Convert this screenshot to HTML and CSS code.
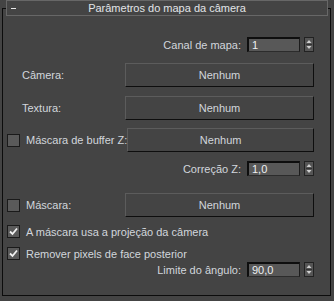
FILE: index.html
```html
<!DOCTYPE html>
<html lang="pt">
<head>
<meta charset="utf-8">
<link rel="stylesheet" href="styles.css">
</head>
<body>
<div class="frame">
  <div class="title">
    <span class="collapse"></span>
    <span class="title-text">Parâmetros do mapa da câmera</span>
  </div>

  <div class="row row-canal right">
    <span class="label">Canal de mapa:</span>
    <div class="field">1</div>
    <div class="spin"><svg width="8" height="13" viewBox="0 0 8 13"><path d="M4 2 L6.5 5 L1.5 5 Z" fill="#cfcfcf"/><line x1="1" y1="6.5" x2="7" y2="6.5" stroke="#333"/><path d="M1.5 8 L6.5 8 L4 11 Z" fill="#cfcfcf"/></svg></div>
  </div>

  <div class="row row-cam">
    <span class="label lbl-plain">Câmera:</span>
    <div class="btn">Nenhum</div>
  </div>

  <div class="row row-tex">
    <span class="label lbl-plain">Textura:</span>
    <div class="btn">Nenhum</div>
  </div>

  <div class="row row-bz">
    <span class="cb"></span>
    <span class="label lbl-cb">Máscara de buffer Z:</span>
    <div class="btn">Nenhum</div>
  </div>

  <div class="row row-corr right">
    <span class="label">Correção Z:</span>
    <div class="field">1,0</div>
    <div class="spin"><svg width="8" height="13" viewBox="0 0 8 13"><path d="M4 2 L6.5 5 L1.5 5 Z" fill="#cfcfcf"/><line x1="1" y1="6.5" x2="7" y2="6.5" stroke="#333"/><path d="M1.5 8 L6.5 8 L4 11 Z" fill="#cfcfcf"/></svg></div>
  </div>

  <div class="row row-mask">
    <span class="cb"></span>
    <span class="label lbl-cb">Máscara:</span>
    <div class="btn">Nenhum</div>
  </div>

  <div class="row row-chk1">
    <span class="cb checked"><svg width="11" height="11" viewBox="0 0 11 11"><path d="M2 5.5 L4.5 8 L9 2.5" fill="none" stroke="#f2f2f2" stroke-width="1.8"/></svg></span>
    <span class="label lbl-cb">A máscara usa a projeção da câmera</span>
  </div>

  <div class="row row-chk2">
    <span class="cb checked"><svg width="11" height="11" viewBox="0 0 11 11"><path d="M2 5.5 L4.5 8 L9 2.5" fill="none" stroke="#f2f2f2" stroke-width="1.8"/></svg></span>
    <span class="label lbl-cb">Remover pixels de face posterior</span>
  </div>

  <div class="row row-lim right">
    <span class="label">Limite do ângulo:</span>
    <div class="field">90,0</div>
    <div class="spin"><svg width="8" height="13" viewBox="0 0 8 13"><path d="M4 2 L6.5 5 L1.5 5 Z" fill="#cfcfcf"/><line x1="1" y1="6.5" x2="7" y2="6.5" stroke="#333"/><path d="M1.5 8 L6.5 8 L4 11 Z" fill="#cfcfcf"/></svg></div>
  </div>
</div>
</body>
</html>
```

FILE: styles.css
```css
html, body {
  margin: 0;
  padding: 0;
  background: #444444;
}
body {
  width: 334px;
  height: 301px;
  overflow: hidden;
  font-family: "Liberation Sans", Arial, sans-serif;
  font-size: 11px;
  color: #d2d6dc;
}
.frame {
  margin: 8px 3px 0 2px;
  border: 1px solid #0c0c0c;
  height: 286px;
  display: flex;
  flex-direction: column;
}
.title {
  margin: -9px 2px 0 3px;
  height: 14px;
  border: 1px solid #676767;
  background: #444444;
  display: flex;
  align-items: center;
  justify-content: center;
  position: relative;
}
.collapse {
  position: absolute;
  left: 4px;
  top: 7px;
  width: 5px;
  height: 1px;
  background: #e8e8e8;
}
.title-text {
  color: #e2e4e8;
  font-size: 11px;
}
.row {
  display: flex;
  align-items: center;
  padding-right: 16px;
}
.right {
  justify-content: flex-end;
  height: 15px;
}
.right .label {
  margin-right: 6px;
}
.field {
  width: 47px;
  height: 12px;
  background: #585858;
  border-top: 2px solid #0e0e0e;
  border-left: 2px solid #0e0e0e;
  border-right: 1px solid #1c1c1c;
  border-bottom: 1px solid #2c2c2c;
  color: #eef0f2;
  line-height: 12px;
  padding-left: 3px;
  margin-right: 4px;
}
.spin {
  width: 8px;
  height: 13px;
  background: #555555;
  border: 1px solid #222222;
  display: flex;
}
.btn {
  width: 187px;
  height: 22px;
  margin-left: auto;
  border-top: 1px solid #5c5c5c;
  border-left: 1px solid #5c5c5c;
  border-right: 1px solid #0e0e0e;
  border-bottom: 1px solid #0e0e0e;
  display: flex;
  align-items: center;
  justify-content: center;
  color: #d2d6dc;
}
.lbl-plain {
  margin-left: 19px;
}
.cb {
  width: 11px;
  height: 11px;
  margin-left: 4px;
  background: #5a5a5a;
  border: 1px solid #1a1a1a;
  flex: none;
  display: flex;
}
.lbl-cb {
  margin-left: 6px;
  white-space: nowrap;
}
.row-canal { margin-top: 21px; }
.row-cam { margin-top: 11px; height: 24px; }
.row-tex { margin-top: 9px; height: 24px; }
.row-bz { margin-top: 8px; height: 24px; }
.row-corr { margin-top: 9px; }
.row-mask { margin-top: 17px; height: 24px; }
.row-chk1 { margin-top: 8px; height: 13px; }
.row-chk2 { margin-top: 9px; height: 13px; }
.row-lim { margin-top: 2px; }
```
